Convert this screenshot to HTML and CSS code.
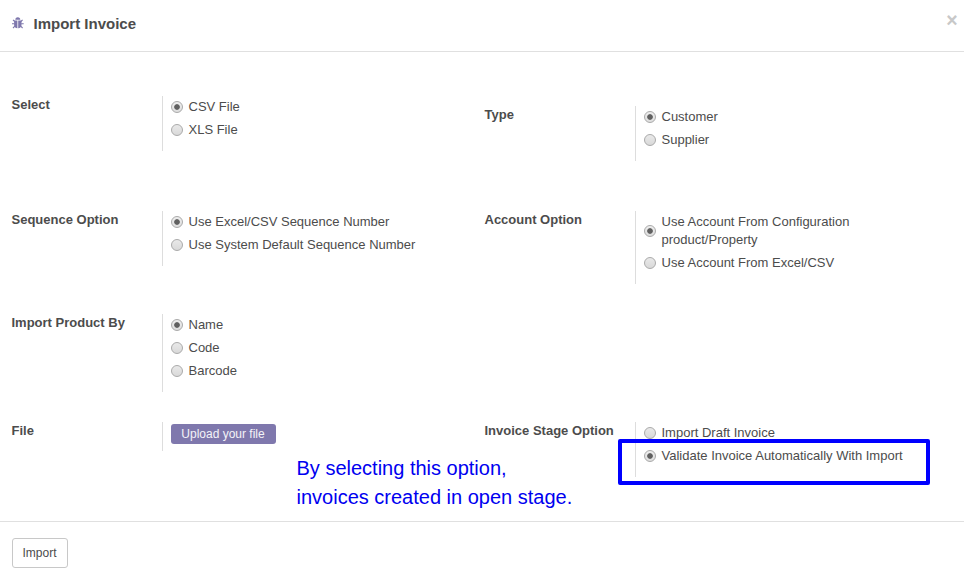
FILE: index.html
```html
<!DOCTYPE html>
<html lang="en">
<head>
<meta charset="utf-8">
<title>Import Invoice</title>
<link rel="stylesheet" href="styles.css">
</head>
<body>
<div class="dialog">
  <header class="header">
    <svg class="bug" viewBox="0 0 12 12" aria-hidden="true">
      <path class="bug-fill" d="M3.300 2.700a2.500 2.500 0 0 1 5 0zM2.100 3.500h3.300v7.800c-2-.1-3.300-1.300-3.300-3.200zM6.200 3.500h3.300v4.600c0 1.900-1.300 3.100-3.300 3.200z"/>
      <path class="bug-legs" d="M2.700 4.500 1 2.800M8.900 4.500l1.700-1.700M2.500 6.700H0M9.100 6.700h2.600M2.900 9.100l-1.900 1.900M8.700 9.100l1.900 1.900"/>
    </svg>
    <h1 class="title">Import Invoice</h1>
    <button class="close" aria-label="Close">×</button>
  </header>
  <main class="form">
    <section class="field">
      <h2 class="label">Select</h2>
      <div class="options">
        <label class="option"><input type="radio" name="format" checked><span>CSV File</span></label>
        <label class="option"><input type="radio" name="format"><span>XLS File</span></label>
      </div>
    </section>
    <section class="field field-lower">
      <h2 class="label">Type</h2>
      <div class="options">
        <label class="option"><input type="radio" name="type" checked><span>Customer</span></label>
        <label class="option"><input type="radio" name="type"><span>Supplier</span></label>
      </div>
    </section>
    <section class="field">
      <h2 class="label">Sequence Option</h2>
      <div class="options">
        <label class="option"><input type="radio" name="sequence" checked><span>Use Excel/CSV Sequence Number</span></label>
        <label class="option"><input type="radio" name="sequence"><span>Use System Default Sequence Number</span></label>
      </div>
    </section>
    <section class="field">
      <h2 class="label">Account Option</h2>
      <div class="options">
        <label class="option"><input type="radio" name="account" checked><span>Use Account From Configuration<br>product/Property</span></label>
        <label class="option"><input type="radio" name="account"><span>Use Account From Excel/CSV</span></label>
      </div>
    </section>
    <section class="field field-first">
      <h2 class="label">Import Product By</h2>
      <div class="options">
        <label class="option"><input type="radio" name="product" checked><span>Name</span></label>
        <label class="option"><input type="radio" name="product"><span>Code</span></label>
        <label class="option"><input type="radio" name="product"><span>Barcode</span></label>
      </div>
    </section>
    <section class="field field-first">
      <h2 class="label">File</h2>
      <div class="options options-file">
        <button class="upload">Upload your file</button>
      </div>
      <p class="note">By selecting this option,<br>invoices created in open stage.</p>
    </section>
    <section class="field">
      <h2 class="label">Invoice Stage Option</h2>
      <div class="options">
        <label class="option"><input type="radio" name="stage"><span>Import Draft Invoice</span></label>
        <label class="option"><input type="radio" name="stage" checked><span>Validate Invoice Automatically With Import</span></label>
      </div>
      <div class="highlight"></div>
    </section>
  </main>
  <footer class="footer">
    <button class="import">Import</button>
  </footer>
</div>
</body>
</html>
```
FILE: styles.css
```css
* {
  box-sizing: border-box;
}

body {
  margin: 0;
  background: #fff;
  color: #4c4c4c;
  font: 13px/18px "Liberation Sans", Arial, sans-serif;
  overflow: hidden;
}

button {
  margin: 0;
  font-family: inherit;
}

.dialog {
  height: 578px;
  display: flex;
  flex-direction: column;
}

.header {
  flex: none;
  display: flex;
  align-items: flex-start;
  height: 52px;
  padding-left: 12px;
  border-bottom: 1px solid #e0e0e0;
}

.bug {
  width: 12px;
  height: 12px;
  margin: 17px 9.5px 0 0;
}

.bug-fill {
  fill: #7f78ad;
}

.bug-legs {
  fill: none;
  stroke: #7f78ad;
  stroke-width: 1.1;
}

.title {
  flex: 1;
  margin: 14px 0 0;
  font-size: 15px;
  line-height: 20px;
}

.close {
  width: 12px;
  margin: 10px 6px 0 0;
  padding: 0;
  border: 0;
  background: none;
  color: #c8c8c8;
  font-size: 19.5px;
  font-weight: bold;
  line-height: 20px;
}

.form {
  flex: none;
  display: grid;
  grid-template-columns: 473px 473px;
  grid-template-rows: 115px 103px 108px 99px;
  padding: 44px 0 0 11.5px;
}

.field {
  position: relative;
  display: flex;
  align-items: flex-start;
}

.field-lower {
  padding-top: 10px;
}

.field-first {
  grid-column: 1;
}

.label {
  flex: none;
  width: 150.5px;
  margin: 0;
  font-size: 13px;
  line-height: 18px;
}

.options {
  display: flex;
  flex-direction: column;
  gap: 5px;
  padding: 2px 0 12px 8px;
  border-left: 1px solid #ddd;
}

.options-file {
  height: 29px;
  padding-bottom: 0;
}

.option {
  display: flex;
  align-items: center;
}

.option input {
  appearance: none;
  flex: none;
  width: 12px;
  height: 12px;
  margin: 0 5.5px 0 0;
  border: 1px solid #aaa;
  border-radius: 50%;
  background: linear-gradient(#e9e9e9, #d9d9d9);
}

.option input:checked {
  background: radial-gradient(circle, #606060 2.4px, transparent 3.2px), linear-gradient(#eee, #ddd);
}

.upload {
  width: 105px;
  height: 20px;
  padding: 0 1px 0 0;
  border: 0;
  border-radius: 3px;
  background: #7f78ad;
  color: #f4f3f8;
  font-size: 12px;
  line-height: 20px;
}

.note {
  position: absolute;
  left: 285px;
  top: 32px;
  margin: 0;
  color: #0000f0;
  font-size: 20px;
  line-height: 29px;
  white-space: nowrap;
}

.highlight {
  position: absolute;
  left: 133.5px;
  top: 17px;
  width: 312px;
  height: 46px;
  border: 4px solid #00f;
  border-radius: 2px;
}

.footer {
  flex: 1;
  padding: 16px 12px 0;
  border-top: 1px solid #e0e0e0;
}

.import {
  width: 56px;
  height: 30px;
  padding: 0 1px 0 0;
  border: 1px solid #c8c8c8;
  border-radius: 3px;
  background: #fff;
  color: #4c4c4c;
  font-size: 12px;
  line-height: 28px;
}
```
